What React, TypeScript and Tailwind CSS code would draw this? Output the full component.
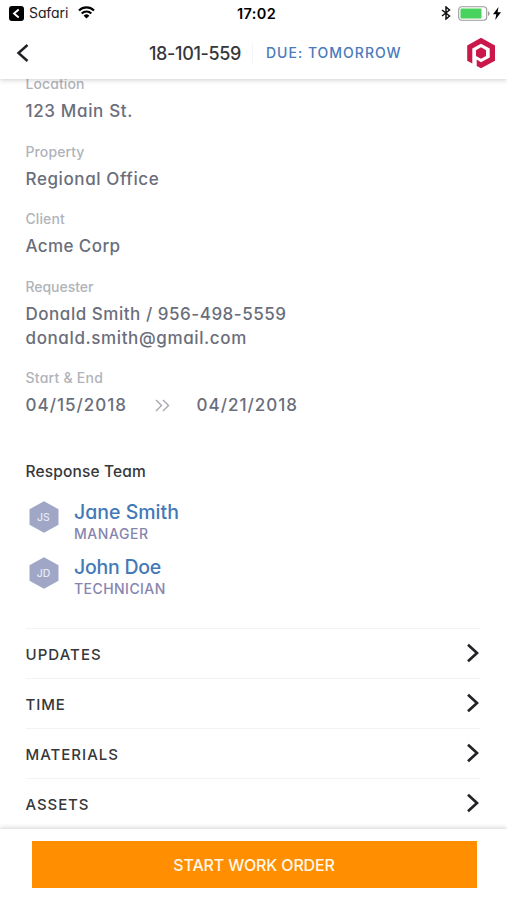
import type { ReactNode } from "react";

function Field({ label, children }: { label: ReactNode; children: ReactNode }) {
  return (
    <div className="mb-[18.5px]">
      <div className="text-[14px] leading-[20px] font-medium text-[#b0b3b9]">{label}</div>
      <div className="mt-[5px] text-[17px] leading-[24px] font-medium text-[#6a6e7b]">{children}</div>
    </div>
  );
}

function Member({ initials, name, role }: { initials: string; name: ReactNode; role: ReactNode }) {
  return (
    <div className="flex h-[55.5px] items-start">
      <div className="relative mt-[1.5px] ml-[3px] flex h-[32px] w-[30px] items-center justify-center">
        <svg className="absolute inset-0" width="30" height="32" viewBox="0 0 30 32">
          <path d="M15 .3 29.500 8.300v15.400L15 31.700.500 23.700v-15.400z" fill="#9fa6c6" />
        </svg>
        <span className="relative pt-[3px] text-[10.5px] leading-none font-medium text-[#e6e9f6]">{initials}</span>
      </div>
      <div className="ml-[15.5px]">
        <div className="text-[19.5px] leading-[24px] font-medium text-[#4479b7]">{name}</div>
        <div className="mt-[2px] text-[14px] leading-[16px] font-medium text-[#8585ae]">{role}</div>
      </div>
    </div>
  );
}

function Row({ children }: { children: ReactNode }) {
  return (
    <div className="flex h-[50px] items-center justify-between border-t border-[#f3f3f4] text-[15px] font-medium text-[#36373a]">
      <div className="pt-[5px]">{children}</div>
      <svg width="14" height="20" viewBox="0 0 14 20" fill="none" stroke="#222326" strokeWidth="2.700">
        <path d="M2 1.800 11 10l-9 8.200" />
      </svg>
    </div>
  );
}

export default function App() {
  return (
    <div
      className="flex h-[900px] w-[507px] flex-col overflow-hidden bg-white font-['Inter','Liberation_Sans',sans-serif]"
      style={{ fontFeatureSettings: '"cv11"' }}
    >
      <header className="relative z-10 h-[79px] shrink-0 bg-white shadow-[0_1px_5px_rgba(0,0,0,0.2)]">
        <div className="flex h-[26px] items-center pr-[6px] pl-[9px] text-black">
          <svg width="15" height="15" viewBox="0 0 15 15">
            <rect width="15" height="15" rx="3" />
            <path d="M9.700 3.500 5 7.500l4.700 4" fill="none" stroke="#fff" strokeWidth="1.900" />
          </svg>
          <span className="-mt-[2px] ml-[5px] w-[39px] text-[14px] tracking-[-0.1px] whitespace-nowrap text-[#222]">Safari</span>
          <svg className="-mt-[2px] ml-[10px]" width="17" height="13" viewBox="0 0 17 13" fill="none" stroke="#000" strokeWidth="2.200">
            <path d="M1 4.500a10.700 10.700 0 0 1 15 0M3.700 7.500a6.800 6.800 0 0 1 9.600 0" />
            <path d="M8.500 12.500 5.600 9.700a4.200 4.200 0 0 1 5.800 0z" fill="#000" stroke="none" />
          </svg>
          <span className="ml-[142px] w-[39px] pt-[1px] text-[14.500px] font-semibold tracking-[0.4px] whitespace-nowrap">17:02</span>
          <svg className="ml-auto" width="10" height="14" viewBox="0 0 10 14" fill="none" stroke="#111" strokeWidth="1.500">
            <path d="m1 4 7.500 6L5 13V1l3.500 3L1 10" />
          </svg>
          <svg className="ml-[7px]" width="32" height="15" viewBox="0 0 32 15">
            <rect x=".7" y=".7" width="28" height="13.600" rx="3" fill="#fff" stroke="#9b9b9b" strokeWidth="1.100" />
            <rect x="2.500" y="2.500" width="21" height="10" rx="1" fill="#48d35e" />
            <path d="M30 5v5q1.700-1 1.700-2.500T30 5" fill="#9b9b9b" />
          </svg>
          <svg className="ml-[3px]" width="8" height="13" viewBox="0 0 8 13">
            <path d="M5.500 0 0 7.300h3.300L2.200 13 8 5.300H4.600z" />
          </svg>
        </div>
        <div className="flex h-[53px] items-center">
          <svg className="ml-[16px]" width="13" height="20" viewBox="0 0 13 20" fill="none" stroke="#222326" strokeWidth="2.500">
            <path d="M11.500 2 2.500 10l9 8" />
          </svg>
          <span className="ml-[120px] w-[92px] pt-[1px] text-[18px] font-medium tracking-[-0.35px] whitespace-nowrap text-[#36373a]">18-101-559</span>
          <span className="ml-[11px] h-[20px] w-px bg-[#f3f5f8]" />
          <span className="ml-[13px] text-[14px] font-medium tracking-[1px] whitespace-nowrap text-[#4a7aba]">DUE: TOMORROW</span>
          <svg className="mr-[11px] ml-auto" width="30" height="32" viewBox="0 0 30 32">
            <path fill="#cb184b" fillRule="evenodd" d="M15 .8 29 8.500v15.200L15 31.200 10.700 28.900V22.500L15 25.200 23.700 20.500V11.500L15 6.700 6.300 11.500V26.500L1.200 23.700V8.500z" />
            <path fill="#cb184b" d="M15 10.300 20 13.200v5.700L15 21.800l-5-2.900v-5.700z" />
          </svg>
        </div>
      </header>

      <main className="-mt-[5px] h-[755px] shrink-0 overflow-hidden pr-[25px] pl-[25.5px]">
        <Field label={<span className="tracking-[0.1px]">Location</span>}><span className="tracking-[0.650px]">123 Main St.</span></Field>
        <Field label={<span className="tracking-[0.1px]">Property</span>}><span className="tracking-[0.6px]">Regional Office</span></Field>
        <Field label={<span className="tracking-[0.1px]">Client</span>}><span className="tracking-[0.4px]">Acme Corp</span></Field>
        <Field label={<span className="tracking-[-0.050px]">Requester</span>}>
          <div className="tracking-[0.530px]">Donald Smith / 956-498-5559</div>
          <div className="tracking-[0.620px]">donald.smith@gmail.com</div>
        </Field>
        <Field label={<span className="tracking-[0.250px]">Start &amp; End</span>}>
          <div className="flex items-center">
            <span className="w-[129px] tracking-[1px]">04/15/2018</span>
            <svg width="15" height="13" viewBox="0 0 15 13" fill="none" stroke="#a4a7ae" strokeWidth="1.400">
              <path d="m1 1 5.500 5.500L1 12M8 1l5.500 5.500L8 12" />
            </svg>
            <span className="ml-[27px] tracking-[1px]">04/21/2018</span>
          </div>
        </Field>

        <h2 className="mt-[43.500px] text-[15.500px] leading-[22px] font-medium text-[#36373a]"><span className="tracking-[0.150px]">Response Team</span></h2>
        <section className="mt-[17px] h-[128px]">
          <Member initials="JS" name={<span className="tracking-[0px]">Jane Smith</span>} role={<span className="tracking-[0.550px]">MANAGER</span>} />
          <Member initials="JD" name={<span className="tracking-[-0.250px]">John Doe</span>} role={<span className="tracking-[0.450px]">TECHNICIAN</span>} />
        </section>
        <nav className="mr-[2px]">
          <Row><span className="tracking-[1.050px]">UPDATES</span></Row>
          <Row><span className="tracking-[0.900px]">TIME</span></Row>
          <Row><span className="tracking-[1px]">MATERIALS</span></Row>
          <Row><span className="tracking-[0.900px]">ASSETS</span></Row>
        </nav>
      </main>

      <footer className="relative z-10 h-[71px] shrink-0 bg-white px-[31.5px] pt-[12px] shadow-[0_-1px_5px_rgba(0,0,0,0.18)]">
        <button className="flex h-[47px] w-[445px] items-center justify-center bg-[#ff8f00] text-[16px] font-medium text-[#fff8e8]">
          <span className="tracking-[-0.150px]">START WORK ORDER</span>
        </button>
      </footer>
    </div>
  );
}
